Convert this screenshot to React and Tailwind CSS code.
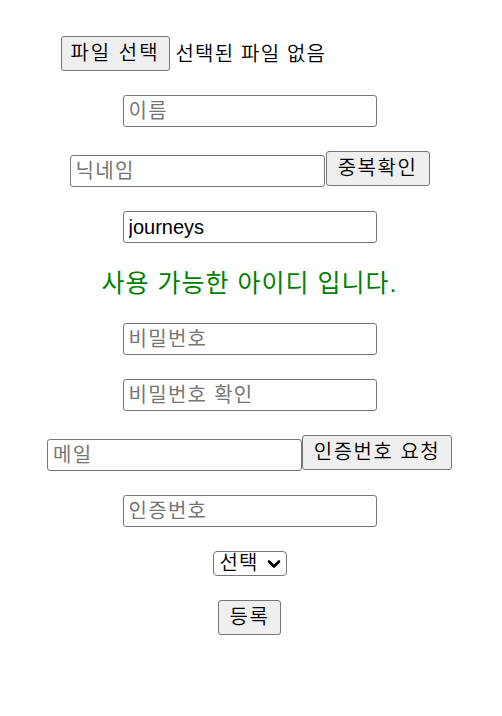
import { useState } from 'react';

const font = { fontFamily: '"Liberation Sans", "Noto Sans CJK KR", sans-serif' };

const inputCls =
  'h-[32px] w-[254px] rounded-[3px] border border-[#767676] bg-white px-[5px] text-[20px] font-normal leading-[30px] text-black placeholder:text-[#757575] placeholder:tracking-[1.3px] outline-none';
const buttonCls =
  'h-[35px] rounded-[3px] border border-[#767676] bg-[#efefef] px-0 text-[20px] font-[350] leading-[33px] tracking-[1.5px] text-black';

function Row({ children, className = '' }) {
  return <div className={`flex justify-center ${className}`}>{children}</div>;
}

export default function App() {
  const [userId, setUserId] = useState('journeys');

  return (
    <div style={font} className="min-h-screen bg-white">
      <div className="flex w-[499px] flex-col gap-6 pt-[36px]">
        {/* 프로필 사진 */}
        <Row>
          <div className="flex w-[378px] items-center">
            <button className={`${buttonCls} w-[109px] tracking-[2px]`}>파일 선택</button>
            <span className="ml-[6px] text-[20px] font-[350] tracking-[1.2px] text-black">선택된 파일 없음</span>
          </div>
        </Row>

        <Row>
          <input className={inputCls} placeholder="이름" />
        </Row>

        <Row className="h-[36px] items-start">
          <input className={`${inputCls} mt-[4px] w-[255px]`} placeholder="닉네임" />
          <button className={`${buttonCls} ml-[1px] w-[104px]`}>중복확인</button>
        </Row>

        <Row>
          <input
            className={inputCls}
            value={userId}
            onChange={(e) => setUserId(e.target.value)}
          />
        </Row>

        <Row className="h-[32px] items-center">
          <p className="text-[25px] font-normal leading-[32px] tracking-[1px] text-[#008000]">사용 가능한 아이디 입니다.</p>
        </Row>

        <Row>
          <input className={inputCls} type="password" placeholder="비밀번호" />
        </Row>

        <Row>
          <input className={inputCls} type="password" placeholder="비밀번호 확인" />
        </Row>

        <Row className="h-[36px] items-start">
          <input className={`${inputCls} mt-[4px] w-[255px]`} placeholder="메일" />
          <button className={`${buttonCls} w-[150px]`}>인증번호 요청</button>
        </Row>

        <Row>
          <input className={inputCls} placeholder="인증번호" />
        </Row>

        <Row>
          <div className="flex h-[25px] w-[74px] items-center justify-between rounded-[4px] border border-[#767676] bg-white pl-[6px] pr-[5px]">
            <span className="text-[20px] font-[350] leading-[23px] tracking-[1px] text-black">선택</span>
            <svg width="14" height="10" viewBox="0 0 14 10" fill="none">
              <path d="M2 2.5 L7 7.5 L12 2.5" stroke="black" strokeWidth="2.6" strokeLinecap="round" strokeLinejoin="round" />
            </svg>
          </div>
        </Row>

        <Row>
          <button className={`${buttonCls} w-[63px]`}>등록</button>
        </Row>
      </div>
    </div>
  );
}
